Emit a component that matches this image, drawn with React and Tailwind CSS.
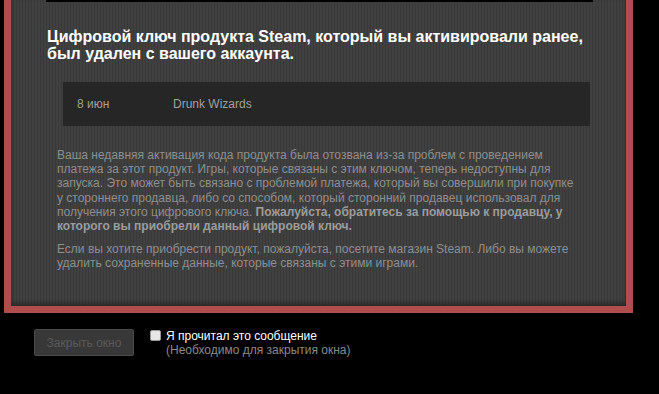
export default function App() {
  return (
    <div className="h-[394px] w-[659px] overflow-hidden bg-black font-['Liberation_Sans',Arial,sans-serif]">
      {/* Red framed dialog */}
      <div className="ml-[4px] w-[629px] border-x-[7px] border-b-[7px] border-[#b24d4d]">
        <div className="h-[306px] bg-[repeating-linear-gradient(90deg,#404040_0px,#404040_2px,#393939_2px,#393939_3px)] shadow-[inset_0_-3px_4px_rgba(0,0,0,0.35)]">
          <div className="ml-[35px] w-[547px]">
            <div className="h-[2px] bg-black" />
            <h1 className="ml-[1px] mt-[26px] text-[16px] font-bold leading-[17px] text-white">
              Цифровой ключ продукта Steam, который вы активировали ранее,
              <br />
              был удален с вашего аккаунта.
            </h1>

            {/* Product row */}
            <div className="ml-[17px] mt-[20px] flex h-[44px] w-[527px] items-center bg-[#262626] text-[12px] text-[#a0a0a0]">
              <span className="ml-[14px] w-[96px]">8 июн</span>
              <span>Drunk Wizards</span>
            </div>

            <div className="ml-[11px] mt-[22px] w-[530px] text-[12px] leading-[14.2px] text-[#8e8e8e]">
              <p>
                Ваша недавняя активация кода продукта была отозвана из-за проблем с проведением
                <br />
                платежа за этот продукт. Игры, которые связаны с этим ключом, теперь недоступны для
                <br />
                запуска. Это может быть связано с проблемой платежа, который вы совершили при покупке
                <br />
                у стороннего продавца, либо со способом, который сторонний продавец использовал для
                <br />
                получения этого цифрового ключа.{" "}
                <b className="text-[#9c9c9c]">
                  Пожалуйста, обратитесь за помощью к продавцу, у
                  <br />
                  которого вы приобрели данный цифровой ключ.
                </b>
              </p>
              <p className="mt-[9px]">
                Если вы хотите приобрести продукт, пожалуйста, посетите магазин Steam. Либо вы можете
                <br />
                удалить сохраненные данные, которые связаны с этими играми.
              </p>
            </div>
          </div>
        </div>
      </div>

      {/* Footer controls */}
      <div className="ml-[34px] mt-[16px] flex items-start">
        <button className="h-[27px] w-[100px] rounded-[2px] border border-[#4a4a4a] bg-[#383838] text-[12px] text-[#5a5a5a]">
          Закрыть окно
        </button>
        <div className="ml-[16px] mt-[1px] h-[11px] w-[11px] rounded-[2px] border border-[#9a9a9a] bg-[#e6e6e6]" />
        <div className="ml-[5px] text-[12px] leading-[14px]">
          <div className="text-white">Я прочитал это сообщение</div>
          <div className="text-[#8a8a8a]">(Необходимо для закрытия окна)</div>
        </div>
      </div>
    </div>
  );
}
